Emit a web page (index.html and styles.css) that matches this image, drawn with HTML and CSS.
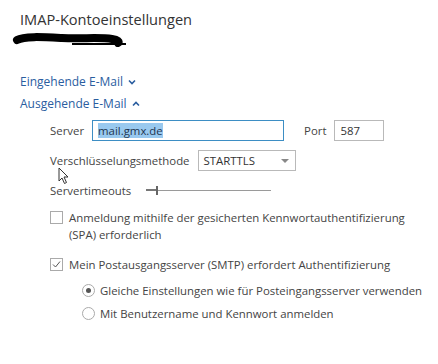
FILE: index.html
```html
<!DOCTYPE html>
<html>
<head>
  <title>IMAP-Kontoeinstellungen</title>
  <link rel="stylesheet" href="styles.css">
</head>
<body>
  <div class="page">
    <h1 class="title">IMAP-Kontoeinstellungen</h1>
    <div class="account">
      <svg width="120" height="14" viewBox="0 0 120 14">
        <path d="M5 7 C12 3 30 4 50 5 C70 6 88 4 100 6 C106 7 108 9 106 10" stroke="#000" stroke-width="8" fill="none" stroke-linecap="round"/>
        <path d="M60 11 L114 11" stroke="#000" stroke-width="2" fill="none"/>
      </svg>
    </div>

    <div class="section-link first">Eingehende E-Mail
      <svg class="chev" width="8" height="6" viewBox="0 0 8 6"><path d="M1 1.5 L4 4.5 L7 1.5" stroke="#2a5d9f" stroke-width="1.6" fill="none"/></svg>
    </div>
    <div class="section-link">Ausgehende E-Mail
      <svg class="chev" width="8" height="6" viewBox="0 0 8 6"><path d="M1 4.5 L4 1.5 L7 4.5" stroke="#2a5d9f" stroke-width="1.6" fill="none"/></svg>
    </div>

    <div class="settings">
      <div class="row server-row">
        <label class="lbl">Server</label>
        <div class="input focused"><span class="sel">mail.gmx.de</span></div>
        <label class="lbl port-lbl">Port</label>
        <div class="input port">587</div>
      </div>
      <div class="row enc-row">
        <label class="lbl">Verschlüsselungsmethode</label>
        <div class="select">STARTTLS <span class="arrow"></span></div>
      </div>
      <div class="row timeout-row">
        <label class="lbl">Servertimeouts</label>
        <div class="slider"><span class="thumb"></span></div>
      </div>

      <div class="check">
        <span class="box"></span>
        <span class="check-text">Anmeldung mithilfe der gesicherten Kennwortauthentifizierung (SPA) erforderlich</span>
      </div>
      <div class="check checked">
        <span class="box">
          <svg width="11" height="11" viewBox="0 0 11 11"><path d="M2 5.5 L4.5 8 L9 2.5" stroke="#555" stroke-width="1" fill="none"/></svg>
        </span>
        <span class="check-text">Mein Postausgangsserver (SMTP) erfordert Authentifizierung</span>
      </div>

      <div class="radios">
        <div class="radio on"><span class="dot"></span>Gleiche Einstellungen wie für Posteingangsserver verwenden</div>
        <div class="radio"><span class="dot"></span>Mit Benutzername und Kennwort anmelden</div>
      </div>
    </div>

    <svg class="cursor" width="12" height="18" viewBox="0 0 12 18">
      <path d="M1 1 L1 14 L4 11 L6.5 16.5 L8.5 15.5 L6 10 L10 10 Z" fill="#fff" stroke="#333" stroke-width="1"/>
    </svg>
  </div>
</body>
</html>
```

FILE: styles.css
```css
body {
  margin: 0;
  background: #fff;
  font-family: "Open Sans", "Noto Sans", sans-serif;
  font-size: 11.4px;
  color: #444;
}

.page {
  position: relative;
  padding: 8px 0 0 20px;
}

.title {
  margin: 0;
  font-size: 14.6px;
  font-weight: normal;
  line-height: 22px;
  color: #333;
}

.account {
  margin: 3px 0 0 -8px;
  height: 14px;
}

.account svg {
  display: block;
}

.section-link {
  color: #2a5d9f;
  font-size: 12px;
  line-height: 22px;
}

.section-link.first {
  margin-top: 24px;
}

.chev {
  margin-left: 2px;
  vertical-align: 1px;
}

.settings {
  padding-left: 30px;
}

.row {
  display: flex;
  align-items: center;
  height: 30px;
}

.lbl {
  margin-right: 8px;
}

.input {
  box-sizing: border-box;
  height: 21px;
  border: 1px solid #b9b9b9;
  padding: 0 5px;
  line-height: 19px;
  color: #333;
}

.input.focused {
  width: 192px;
  border-color: #3d8ec4;
}

.sel {
  background: #99c9ef;
  color: #1f3550;
}

.port-lbl {
  margin-left: 20px;
}

.input.port {
  width: 50px;
}

.select {
  position: relative;
  box-sizing: border-box;
  width: 98px;
  height: 21px;
  border: 1px solid #b9b9b9;
  padding: 0 5px;
  line-height: 19px;
  color: #333;
}

.arrow {
  position: absolute;
  right: 6px;
  top: 8px;
  border-left: 4px solid transparent;
  border-right: 4px solid transparent;
  border-top: 4px solid #888;
}

.timeout-row .lbl {
  margin-right: 15px;
}

.slider {
  position: relative;
  width: 125px;
  height: 1px;
  background: #9a9a9a;
}

.thumb {
  position: absolute;
  left: 10px;
  top: -4px;
  width: 2px;
  height: 9px;
  background: #666;
}

.slider::before {
  content: "";
  position: absolute;
  left: 0;
  top: -1px;
  width: 10px;
  height: 2px;
  background: #777;
}

.check {
  display: flex;
  align-items: flex-start;
  margin-top: 4px;
  line-height: 17px;
  width: 360px;
}

.check.checked {
  margin-top: 13px;
}

.box {
  flex: none;
  box-sizing: border-box;
  width: 13px;
  height: 13px;
  border: 1px solid #aaa;
  margin: 2px 6px 0 0;
}

.box svg {
  display: block;
}

.radios {
  padding-left: 32px;
  margin-top: 6px;
}

.radio {
  display: flex;
  align-items: center;
  height: 23px;
}

.dot {
  box-sizing: border-box;
  width: 13px;
  height: 13px;
  border: 1px solid #aaa;
  border-radius: 50%;
  margin-right: 5px;
  position: relative;
}

.radio.on .dot::after {
  content: "";
  position: absolute;
  left: 3px;
  top: 3px;
  width: 5px;
  height: 5px;
  border-radius: 50%;
  background: #555;
}

.cursor {
  position: absolute;
  left: 58px;
  top: 167px;
}
```
